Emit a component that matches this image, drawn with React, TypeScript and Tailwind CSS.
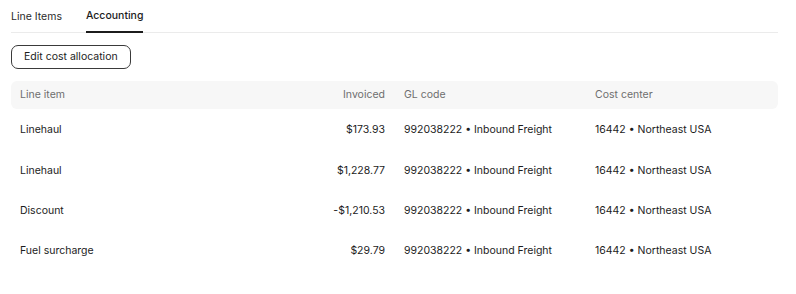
import React from "react";

const rows = [
  { item: "Linehaul", invoiced: "$173.93" },
  { item: "Linehaul", invoiced: "$1,228.77" },
  { item: "Discount", invoiced: "-$1,210.53" },
  { item: "Fuel surcharge", invoiced: "$29.79" },
];

export default function App() {
  return (
    <div
      className="w-[796px] h-[294px] bg-white text-[10.5px] text-[#1c1c1c]"
      style={{ fontFamily: "Inter, 'Noto Sans', sans-serif" }}
    >
      <div className="ml-[11px] w-[767px]">
        <div className="flex gap-[24px] border-b border-[#ebebeb] h-[33px]">
          <div className="h-[33px] flex items-center text-[#2a2a2a]">Line Items</div>
          <div className="h-[33px] flex items-center font-medium border-b-2 border-[#1c1c1c] -mb-px pt-[1px]">
            Accounting
          </div>
        </div>
        <div className="mt-[12px]">
          <button className="h-[24px] px-[12px] rounded-[7px] border border-[#3a3a3a] text-[10.5px] text-[#1c1c1c] flex items-center">
            Edit cost allocation
          </button>
        </div>
        <div className="mt-[12px]">
          <div className="grid grid-cols-[230px_135px_191px_1fr] h-[28px] items-center bg-[#f7f7f7] rounded-[6px] pl-[9px] text-[#6e6e6e]">
            <div>Line item</div>
            <div className="text-right">Invoiced</div>
            <div className="pl-[19px]">GL code</div>
            <div className="pl-[19px]">Cost center</div>
          </div>
          <div className="pt-[0.8px]">
            {rows.map((r, i) => (
              <div
                key={i}
                className="grid grid-cols-[230px_135px_191px_1fr] h-[40.4px] items-center pl-[9px]"
              >
                <div>{r.item}</div>
                <div className="text-right">{r.invoiced}</div>
                <div className="pl-[19px]">992038222 • Inbound Freight</div>
                <div className="pl-[19px]">16442 • Northeast USA</div>
              </div>
            ))}
          </div>
        </div>
      </div>
    </div>
  );
}
